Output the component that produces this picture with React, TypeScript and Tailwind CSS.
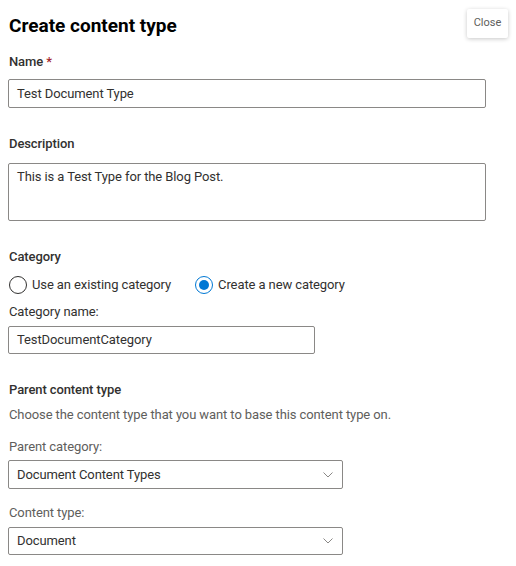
import React from "react";

const font = { fontFamily: 'Roboto, "Open Sans", sans-serif' };

function Chevron() {
  return (
    <svg width="10" height="6" viewBox="0 0 10 6" className="shrink-0">
      <path d="M0.5 0.5 L5 5 L9.5 0.5" fill="none" stroke="#8a8886" strokeWidth="1" />
    </svg>
  );
}

export default function App() {
  return (
    <div className="relative w-[516px] h-[566px] bg-white text-[#323130] overflow-hidden tracking-[-0.1px]" style={font}>
      <div className="absolute left-[467px] top-[9px] w-[41px] h-[29px] bg-white shadow-[0_1px_4px_rgba(0,0,0,0.22)] rounded-[2px] flex items-center justify-center text-[11px] text-[#605e5c] tracking-normal">
        Close
      </div>
      <div className="pl-[8px] pt-[12px]">
        <h1 className="text-[19px] font-bold leading-[28px] pl-[1px] text-black tracking-normal">Create content type</h1>

        <div className="mt-[12px] text-[13px] font-medium leading-[20px] pl-[1px]">
          Name <span className="text-[#a4262c]">*</span>
        </div>
        <div className="mt-[7px] w-[478px] h-[29px] border border-[#8a8886] rounded-[2px] flex items-center px-[8px] text-[13px]">
          Test Document Type
        </div>

        <div className="mt-[26px] text-[13px] font-medium leading-[20px] pl-[1px]">Description</div>
        <div className="mt-[9px] w-[478px] h-[58px] border border-[#8a8886] rounded-[2px] px-[8px] pt-[3px] text-[13px] leading-[20px]">
          This is a Test Type for the Blog Post.
        </div>

        <div className="mt-[26px] text-[13px] font-medium leading-[20px] pl-[1px]">Category</div>
        <div className="mt-[8px] flex items-center text-[13px] leading-[20px] h-[20px]">
          <div className="flex items-center">
            <span className="w-[18px] h-[18px] rounded-full border border-[#323130] ml-[1px]" />
            <span className="ml-[5px]">Use an existing category</span>
          </div>
          <div className="flex items-center ml-[24px]">
            <span className="w-[18px] h-[18px] rounded-full border border-[#0078d4] flex items-center justify-center">
              <span className="w-[10px] h-[10px] rounded-full bg-[#0078d4]" />
            </span>
            <span className="ml-[5px]">Create a new category</span>
          </div>
        </div>
        <div className="mt-[7px] text-[13px] leading-[20px] pl-[1px]">Category name:</div>
        <div className="mt-[4px] w-[307px] h-[28px] border border-[#8a8886] rounded-[2px] flex items-center px-[8px] text-[13px]">
          TestDocumentCategory
        </div>

        <div className="mt-[26px] text-[13px] font-medium leading-[20px] pl-[1px]">Parent content type</div>
        <div className="mt-[5px] text-[13px] leading-[20px] pl-[1px] text-[#605e5c]">
          Choose the content type that you want to base this content type on.
        </div>
        <div className="mt-[12px] text-[13px] leading-[20px] pl-[1px] text-[#605e5c]">Parent category:</div>
        <div className="mt-[3px] w-[335px] h-[29px] border border-[#8a8886] rounded-[2px] flex items-center justify-between pl-[8px] pr-[9px] text-[13px]">
          <span>Document Content Types</span>
          <Chevron />
        </div>
        <div className="mt-[14px] text-[13px] leading-[20px] pl-[1px] text-[#605e5c]">Content type:</div>
        <div className="mt-[4px] w-[335px] h-[28px] border border-[#8a8886] rounded-[2px] flex items-center justify-between pl-[8px] pr-[9px] text-[13px]">
          <span>Document</span>
          <Chevron />
        </div>
      </div>
    </div>
  );
}
